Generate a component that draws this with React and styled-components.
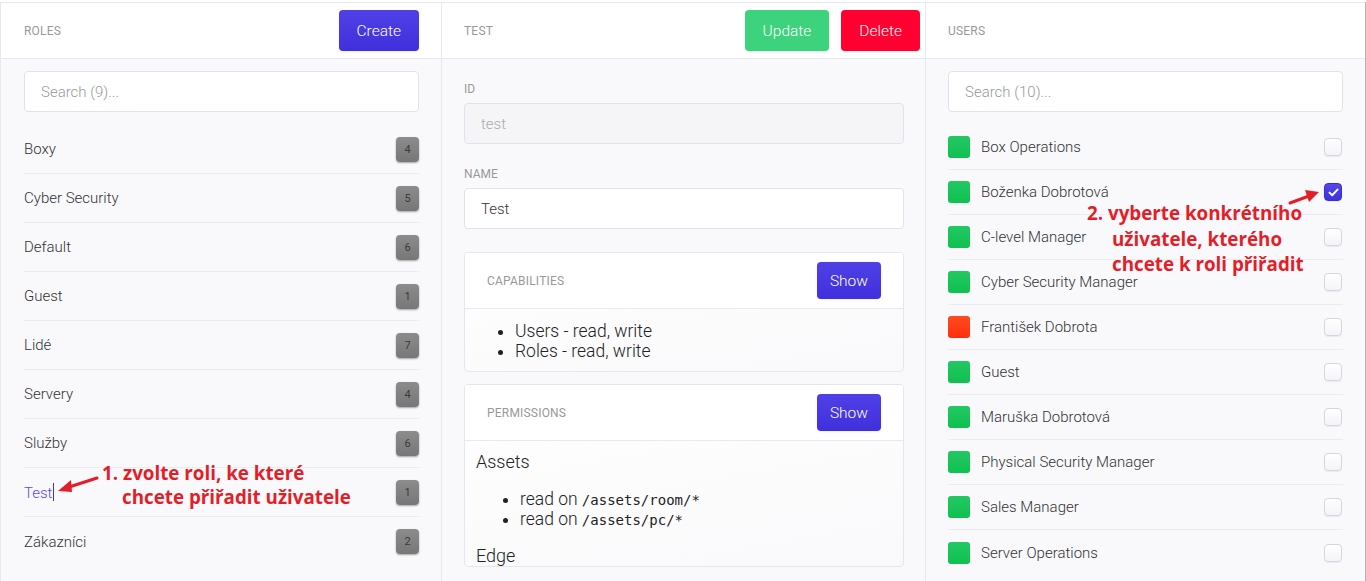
import React from "react";
import styled, { createGlobalStyle } from "styled-components";

const GlobalStyle = createGlobalStyle`
  html, body { margin: 0; padding: 0; background: #fff; }
  body { font-family: Roboto, "Liberation Sans", sans-serif; font-weight: 300; color: #333; }
  * { box-sizing: border-box; }
`;

const Page = styled.div`
  position: relative;
  display: grid;
  grid-template-columns: 441px 484px 440px 1px;
  height: 581px;
  padding-top: 2px;
  overflow: hidden;
`;

const Column = styled.div`
  display: flex;
  flex-direction: column;
  border-top: 1px solid #e8e8f0;
  border-left: 1px solid #e8e8f0;
  background: #f9f9fb;
  min-height: 0;
`;

const Scrollbar = styled.div`
  background: #b5b5b8;
`;

const Header = styled.div`
  display: flex;
  align-items: center;
  gap: 12px;
  height: 56px;
  padding: 0 ${(p) => p.right || 22}px 0 ${(p) => p.left || 22}px;
  background: #fff;
  border-bottom: 1px solid #e8e8f0;
  flex-shrink: 0;
`;

const Title = styled.div`
  flex: 1;
  font-size: 12px;
  font-weight: 400;
  color: #999;
  letter-spacing: 0.2px;
  text-transform: uppercase;
`;

const colors = {
  primary: "linear-gradient(#4f40e6, #4030dc)",
  success: "#3dd27c",
  danger: "#ff0030",
};

const Button = styled.button`
  height: ${(p) => (p.small ? 37 : 41)}px;
  padding: 0 ${(p) => (p.small ? 13 : 18)}px;
  border: none;
  border-radius: 4px;
  background: ${(p) => colors[p.kind || "primary"]};
  color: #fff;
  font-family: Roboto, sans-serif;
  font-weight: 300;
  font-size: 15.5px;
  box-shadow: 0 1px 2px rgba(0, 0, 0, 0.08);
`;

const Body = styled.div`
  flex: 1;
  padding: ${(p) => p.top || 12}px ${(p) => p.right || 22}px 0 ${(p) => p.left || 22}px;
`;

const Search = styled.input`
  width: 100%;
  height: 41px;
  padding: 0 16px;
  border: 1px solid #e2e2ec;
  border-radius: 4px;
  background: #fff;
  font-family: Roboto, sans-serif;
  font-weight: 300;
  font-size: 15px;
  color: #333;
  outline: none;
  &::placeholder { color: #999; }
`;

const List = styled.div`
  margin-top: ${(p) => p.gap}px;
`;

const RoleRow = styled.div`
  display: flex;
  align-items: center;
  justify-content: space-between;
  height: 49px;
  font-size: 15px;
  color: ${(p) => (p.active ? "#5a4ce6" : "#333")};
  border-bottom: ${(p) => (p.last ? "none" : "1px solid #ebebf0")};
`;

const Caret = styled.span`
  display: inline-block;
  width: 1px;
  height: 18px;
  margin-left: 1px;
  vertical-align: -3px;
  background: #4030dc;
`;

const Badge = styled.span`
  width: 23px;
  height: 25px;
  display: flex;
  align-items: center;
  justify-content: center;
  border-radius: 4px;
  background: linear-gradient(#8c8c8c, #777);
  box-shadow: 0 1px 2px rgba(0, 0, 0, 0.35);
  font-size: 11px;
  font-weight: 400;
  color: #3a3a3a;
`;

const Label = styled.div`
  font-size: 12px;
  font-weight: 400;
  color: #999;
  text-transform: uppercase;
  margin-bottom: 7px;
`;

const Field = styled.input`
  width: 100%;
  height: 41px;
  padding: 0 16px;
  border: 1px solid #e2e2ec;
  border-radius: 4px;
  background: ${(p) => (p.disabled ? "#f5f5f8" : "#fff")};
  font-family: Roboto, sans-serif;
  font-weight: 300;
  font-size: 15px;
  color: ${(p) => (p.disabled ? "#aaa" : "#333")};
  margin-bottom: 23px;
  outline: none;
`;

const Card = styled.div`
  border: 1px solid #e6e6ee;
  border-radius: 4px;
  overflow: hidden;
  margin-bottom: 12px;
  background: linear-gradient(170deg, #fff, #f9f9fb);
`;

const CardHeader = styled.div`
  display: flex;
  align-items: center;
  justify-content: space-between;
  height: 56px;
  padding: 0 22px;
  background: #fff;
  border-bottom: 1px solid #e8e8f0;
`;

const Bullets = styled.ul`
  margin: ${(p) => p.m || "12px 0 10px"};
  padding-left: ${(p) => p.indent || 50}px;
  font-size: 17.5px;
  line-height: 20px;
  color: #222;
  li { line-height: 20px; }
`;

const Code = styled.code`
  font-family: "DejaVu Sans Mono", "Liberation Mono", monospace;
  font-size: 14px;
  line-height: 1;
`;

const Section = styled.div`
  padding: ${(p) => p.top ?? 10}px 11px 0;
  font-size: 18px;
  color: #222;
`;

const UserRow = styled.div`
  display: flex;
  align-items: center;
  height: 45px;
  font-size: 15px;
  color: #333;
  border-bottom: ${(p) => (p.last ? "none" : "1px solid #ebebf0")};
`;

const Dot = styled.span`
  width: 22px;
  height: 22px;
  border-radius: 3px;
  margin-right: 11px;
  background: ${(p) =>
    p.off ? "linear-gradient(#ff4a1e, #ff3010)" : "linear-gradient(#22c863, #10c050)"};
`;

const Name = styled.span`
  flex: 1;
`;

const Check = styled.span`
  width: 18px;
  height: 18px;
  margin-right: 1px;
  border-radius: 4px;
  display: flex;
  align-items: center;
  justify-content: center;
  border: 1px solid ${(p) => (p.on ? "#3a2ed0" : "#d6d6e2")};
  background: ${(p) => (p.on ? "linear-gradient(#5547e8, #3f31dc)" : "linear-gradient(#fff, #f4f4f8)")};
  box-shadow: 0 1px 1px rgba(0, 0, 0, 0.06);
`;

const Note = styled.div`
  position: absolute;
  left: ${(p) => p.x}px;
  top: ${(p) => p.y}px;
  font-family: "Open Sans", "Liberation Sans", sans-serif;
  font-weight: 700;
  font-size: 18.8px;
  line-height: ${(p) => p.lh || 24}px;
  color: #e31e28;
  white-space: nowrap;
`;

const NoteLine = styled.div`
  padding-left: ${(p) => p.indent || 0}px;
`;

const Arrow = styled.svg`
  position: absolute;
  left: 0;
  top: 0;
  pointer-events: none;
`;

const roles = [
  ["Boxy", 4], ["Cyber Security", 5], ["Default", 6], ["Guest", 1], ["Lidé", 7],
  ["Servery", 4], ["Služby", 6], ["Test", 1], ["Zákazníci", 2],
];

const users = [
  ["Box Operations"], ["Boženka Dobrotová", false, true], ["C-level Manager"],
  ["Cyber Security Manager"], ["František Dobrota", true], ["Guest"],
  ["Maruška Dobrotová"], ["Physical Security Manager"], ["Sales Manager"],
  ["Server Operations"],
];

export default function App() {
  return (
    <Page>
      <GlobalStyle />
      <Column>
        <Header left={23}>
          <Title>Roles</Title>
          <Button>Create</Button>
        </Header>
        <Body left={23}>
          <Search placeholder="Search (9)..." />
          <List gap={13}>
            {roles.map(([name, n], i) => (
              <RoleRow key={name} active={name === "Test"} last={i === roles.length - 1}>
                <span>
                  {name}
                  {name === "Test" && <Caret />}
                </span>
                <Badge>{n}</Badge>
              </RoleRow>
            ))}
          </List>
        </Body>
      </Column>

      <Column>
        <Header right={5}>
          <Title>Test</Title>
          <Button kind="success">Update</Button>
          <Button kind="danger">Delete</Button>
        </Header>
        <Body top={23} right={21}>
          <Label>ID</Label>
          <Field disabled value="test" readOnly />
          <Label>Name</Label>
          <Field value="Test" readOnly />
          <Card>
            <CardHeader>
              <Title>Capabilities</Title>
              <Button small>Show</Button>
            </CardHeader>
            <Bullets>
              <li>Users - read, write</li>
              <li>Roles - read, write</li>
            </Bullets>
          </Card>
          <Card>
            <CardHeader>
              <Title>Permissions</Title>
              <Button small>Show</Button>
            </CardHeader>
            <Section>Assets</Section>
            <Bullets indent={55} m="17px 0 16px">
              <li>read on <Code>/assets/room/*</Code></li>
              <li>read on <Code>/assets/pc/*</Code></li>
            </Bullets>
            <Section top={0}>Edge</Section>
          </Card>
        </Body>
      </Column>

      <Column>
        <Header>
          <Title>Users</Title>
        </Header>
        <Body>
          <Search placeholder="Search (10)..." />
          <List gap={13}>
            {users.map(([name, off, on], i) => (
              <UserRow key={name} last={i === users.length - 1}>
                <Dot off={off} />
                <Name>{name}</Name>
                <Check on={on}>
                  {on && (
                    <svg width="11" height="9" viewBox="0 0 11 9">
                      <path d="M1.5 4.6 L4.2 7.2 L9.5 1.6" fill="none" stroke="#fff" strokeWidth="2" strokeLinecap="round" strokeLinejoin="round" />
                    </svg>
                  )}
                </Check>
              </UserRow>
            ))}
          </List>
        </Body>
      </Column>
      <Scrollbar />

      <Note x={102} y={461}>
        <NoteLine>1. zvolte roli, ke které</NoteLine>
        <NoteLine indent={20}>chcete přiřadit uživatele</NoteLine>
      </Note>
      <Note x={1087} y={201} lh={25.5}>
        <NoteLine>2. vyberte konkrétního</NoteLine>
        <NoteLine indent={25}>uživatele, kterého</NoteLine>
        <NoteLine indent={25}>chcete k roli přiřadit</NoteLine>
      </Note>
      <Arrow width="1366" height="581">
        <line x1="97" y1="478" x2="66" y2="488" stroke="#e31e28" strokeWidth="3" strokeLinecap="round" />
        <polygon points="58,491 71,480 72,492" fill="#e31e28" />
        <line x1="1290" y1="203" x2="1309" y2="196" stroke="#e31e28" strokeWidth="3" strokeLinecap="round" />
        <polygon points="1319,192 1305,190 1309,202" fill="#e31e28" />
      </Arrow>
    </Page>
  );
}
